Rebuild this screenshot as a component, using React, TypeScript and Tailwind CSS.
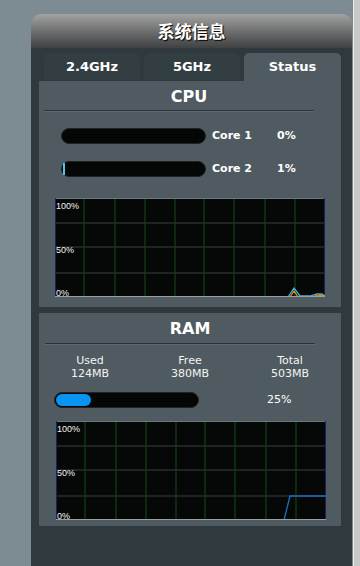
import React from 'react';

type Line = { points: string; color: string };

const font = { fontFamily: '"DejaVu Sans", Verdana, sans-serif' };

const Graph: React.FC<{ lines: Line[] }> = ({ lines }) => {
  const vx = [29, 60, 90, 120, 149, 179, 210, 240];
  const hy = [25, 49, 75];
  return (
    <svg width="270" height="99" viewBox="0 0 270 99" className="block">
      <rect x="0" y="0" width="270" height="99" fill="#060808" />
      {vx.map((x) => (
        <line key={x} x1={x} y1="0" x2={x} y2="99" stroke="#0f3611" strokeWidth="1.5" />
      ))}
      {hy.map((y) => (
        <line key={y} x1="0" y1={y} x2="270" y2={y} stroke="#2b2d2d" strokeWidth="1.5" />
      ))}
      <line x1="0" y1="0.5" x2="270" y2="0.5" stroke="#6f7579" />
      <line x1="0.5" y1="0" x2="0.5" y2="99" stroke="#1d1f63" />
      <line x1="269.5" y1="0" x2="269.5" y2="99" stroke="#1d1f63" />
      {lines.map((l, i) => (
        <polyline key={i} points={l.points} fill="none" stroke={l.color} strokeWidth="1.3" />
      ))}
      <line x1="0" y1="98.5" x2="270" y2="98.5" stroke="#9a9ea0" />
      <g fill="#f2f2f2" fontSize="9" fontFamily='"Liberation Sans", Arial, sans-serif'>
        <text x="1" y="11">100%</text>
        <text x="1" y="55">50%</text>
        <text x="1" y="98">0%</text>
      </g>
    </svg>
  );
};

const Rule: React.FC<{ ml: string }> = ({ ml }) => (
  <div className={`${ml} w-[270px]`}>
    <div className="h-px bg-[#2a3337]" />
    <div className="h-px bg-[#5e6a6f]" />
  </div>
);

const CoreRow: React.FC<{ name: string; pct: string; fill?: boolean; mt: string }> = ({ name, pct, fill, mt }) => (
  <div className={`flex items-center h-4 ${mt}`}>
    <div className="ml-[22px] w-[145px] h-4 rounded-full bg-[#050707] border border-[#1e2426] flex items-center">
      {fill && <div className="ml-[1px] w-[2px] h-[12px] bg-[#4cc4f0]" />}
    </div>
    <span className="ml-[6px] w-[65px] text-[11px] font-bold text-white">{name}</span>
    <span className="text-[11px] font-bold text-white">{pct}</span>
  </div>
);

export default function App() {
  return (
    <div className="w-[360px] h-[566px] overflow-hidden flex bg-[#7d8b92]" style={font}>
      <div className="w-[31px] shrink-0" />
      <div className="w-[321px] shrink-0 mt-[14px] flex flex-col">
        <div className="h-[34px] rounded-t-[10px] bg-gradient-to-b from-[#a3a3a3] to-[#3f4142] flex items-center justify-center">
          <span
            className="text-[17px] font-bold text-white [text-shadow:1px_1px_1px_#000]"
            style={{ fontFamily: '"Noto Sans CJK SC", sans-serif' }}
          >
            系统信息
          </span>
        </div>
        <div className="flex-1 bg-[#2f393e] pl-[8px] pr-[11px] pt-[5px]">
          <div className="flex gap-1 pl-[5px] h-[28px]">
            <div className="w-[96px] h-[27px] rounded-t-[5px] bg-[#333e43] flex items-center justify-center text-[13px] font-bold text-white">
              2.4GHz
            </div>
            <div className="w-[96px] h-[27px] rounded-t-[5px] bg-[#333e43] flex items-center justify-center text-[13px] font-bold text-white">
              5GHz
            </div>
            <div className="w-[97px] h-[28px] rounded-t-[5px] bg-[#4f5b60] flex items-center justify-center text-[13px] font-bold text-white">
              Status
            </div>
          </div>

          <div className="w-[302px] h-[226px] bg-[#4f5b60] pt-[6px] flex flex-col">
            <div className="text-center text-[16px] leading-[20px] font-bold text-white pr-[2px]">CPU</div>
            <div className="mt-[3px]">
              <Rule ml="ml-[5px]" />
            </div>
            <CoreRow name="Core 1" pct="0%" mt="mt-[16px]" />
            <CoreRow name="Core 2" pct="1%" fill mt="mt-[17px]" />
            <div className="mt-[21px] ml-[16px]">
              <Graph
                lines={[
                  { points: '233,99 239,90 245,98 255,98 262,96 267,96 270,98', color: '#38b6dc' },
                  { points: '235,99 239,93 243,99 257,99 263,97 270,98', color: '#e58a17' },
                ]}
              />
            </div>
          </div>

          <div className="mt-[6px] w-[302px] h-[213px] bg-[#4f5b60] pt-[6px] flex flex-col">
            <div className="text-center text-[16px] leading-[20px] font-bold text-white">RAM</div>
            <div className="mt-[4px]">
              <Rule ml="ml-[6px]" />
            </div>
            <div className="mt-[9px] ml-[1px] w-[300px] grid grid-cols-3 text-[11px] leading-[13px] text-[#f4f4f4] text-center">
              <div>
                <div>Used</div>
                <div>124MB</div>
              </div>
              <div>
                <div>Free</div>
                <div>380MB</div>
              </div>
              <div>
                <div>Total</div>
                <div>503MB</div>
              </div>
            </div>
            <div className="mt-[12px] flex items-center h-4">
              <div className="ml-[15px] w-[145px] h-4 rounded-full bg-[#050707] border border-[#1e2426] flex items-center px-[1px]">
                <div className="w-[35px] h-[12px] rounded-full bg-[#0994f2]" />
              </div>
              <span className="ml-[68px] text-[11px] text-white">25%</span>
            </div>
            <div className="mt-[13px] ml-[17px]">
              <Graph lines={[{ points: '228,99 234,75 270,75', color: '#1a72bd' }]} />
            </div>
          </div>
        </div>
      </div>
      <div className="w-px shrink-0" />
      <div className="w-[7px] shrink-0 bg-[#c8c8c8] border-l border-[#ececec]" />
    </div>
  );
}
